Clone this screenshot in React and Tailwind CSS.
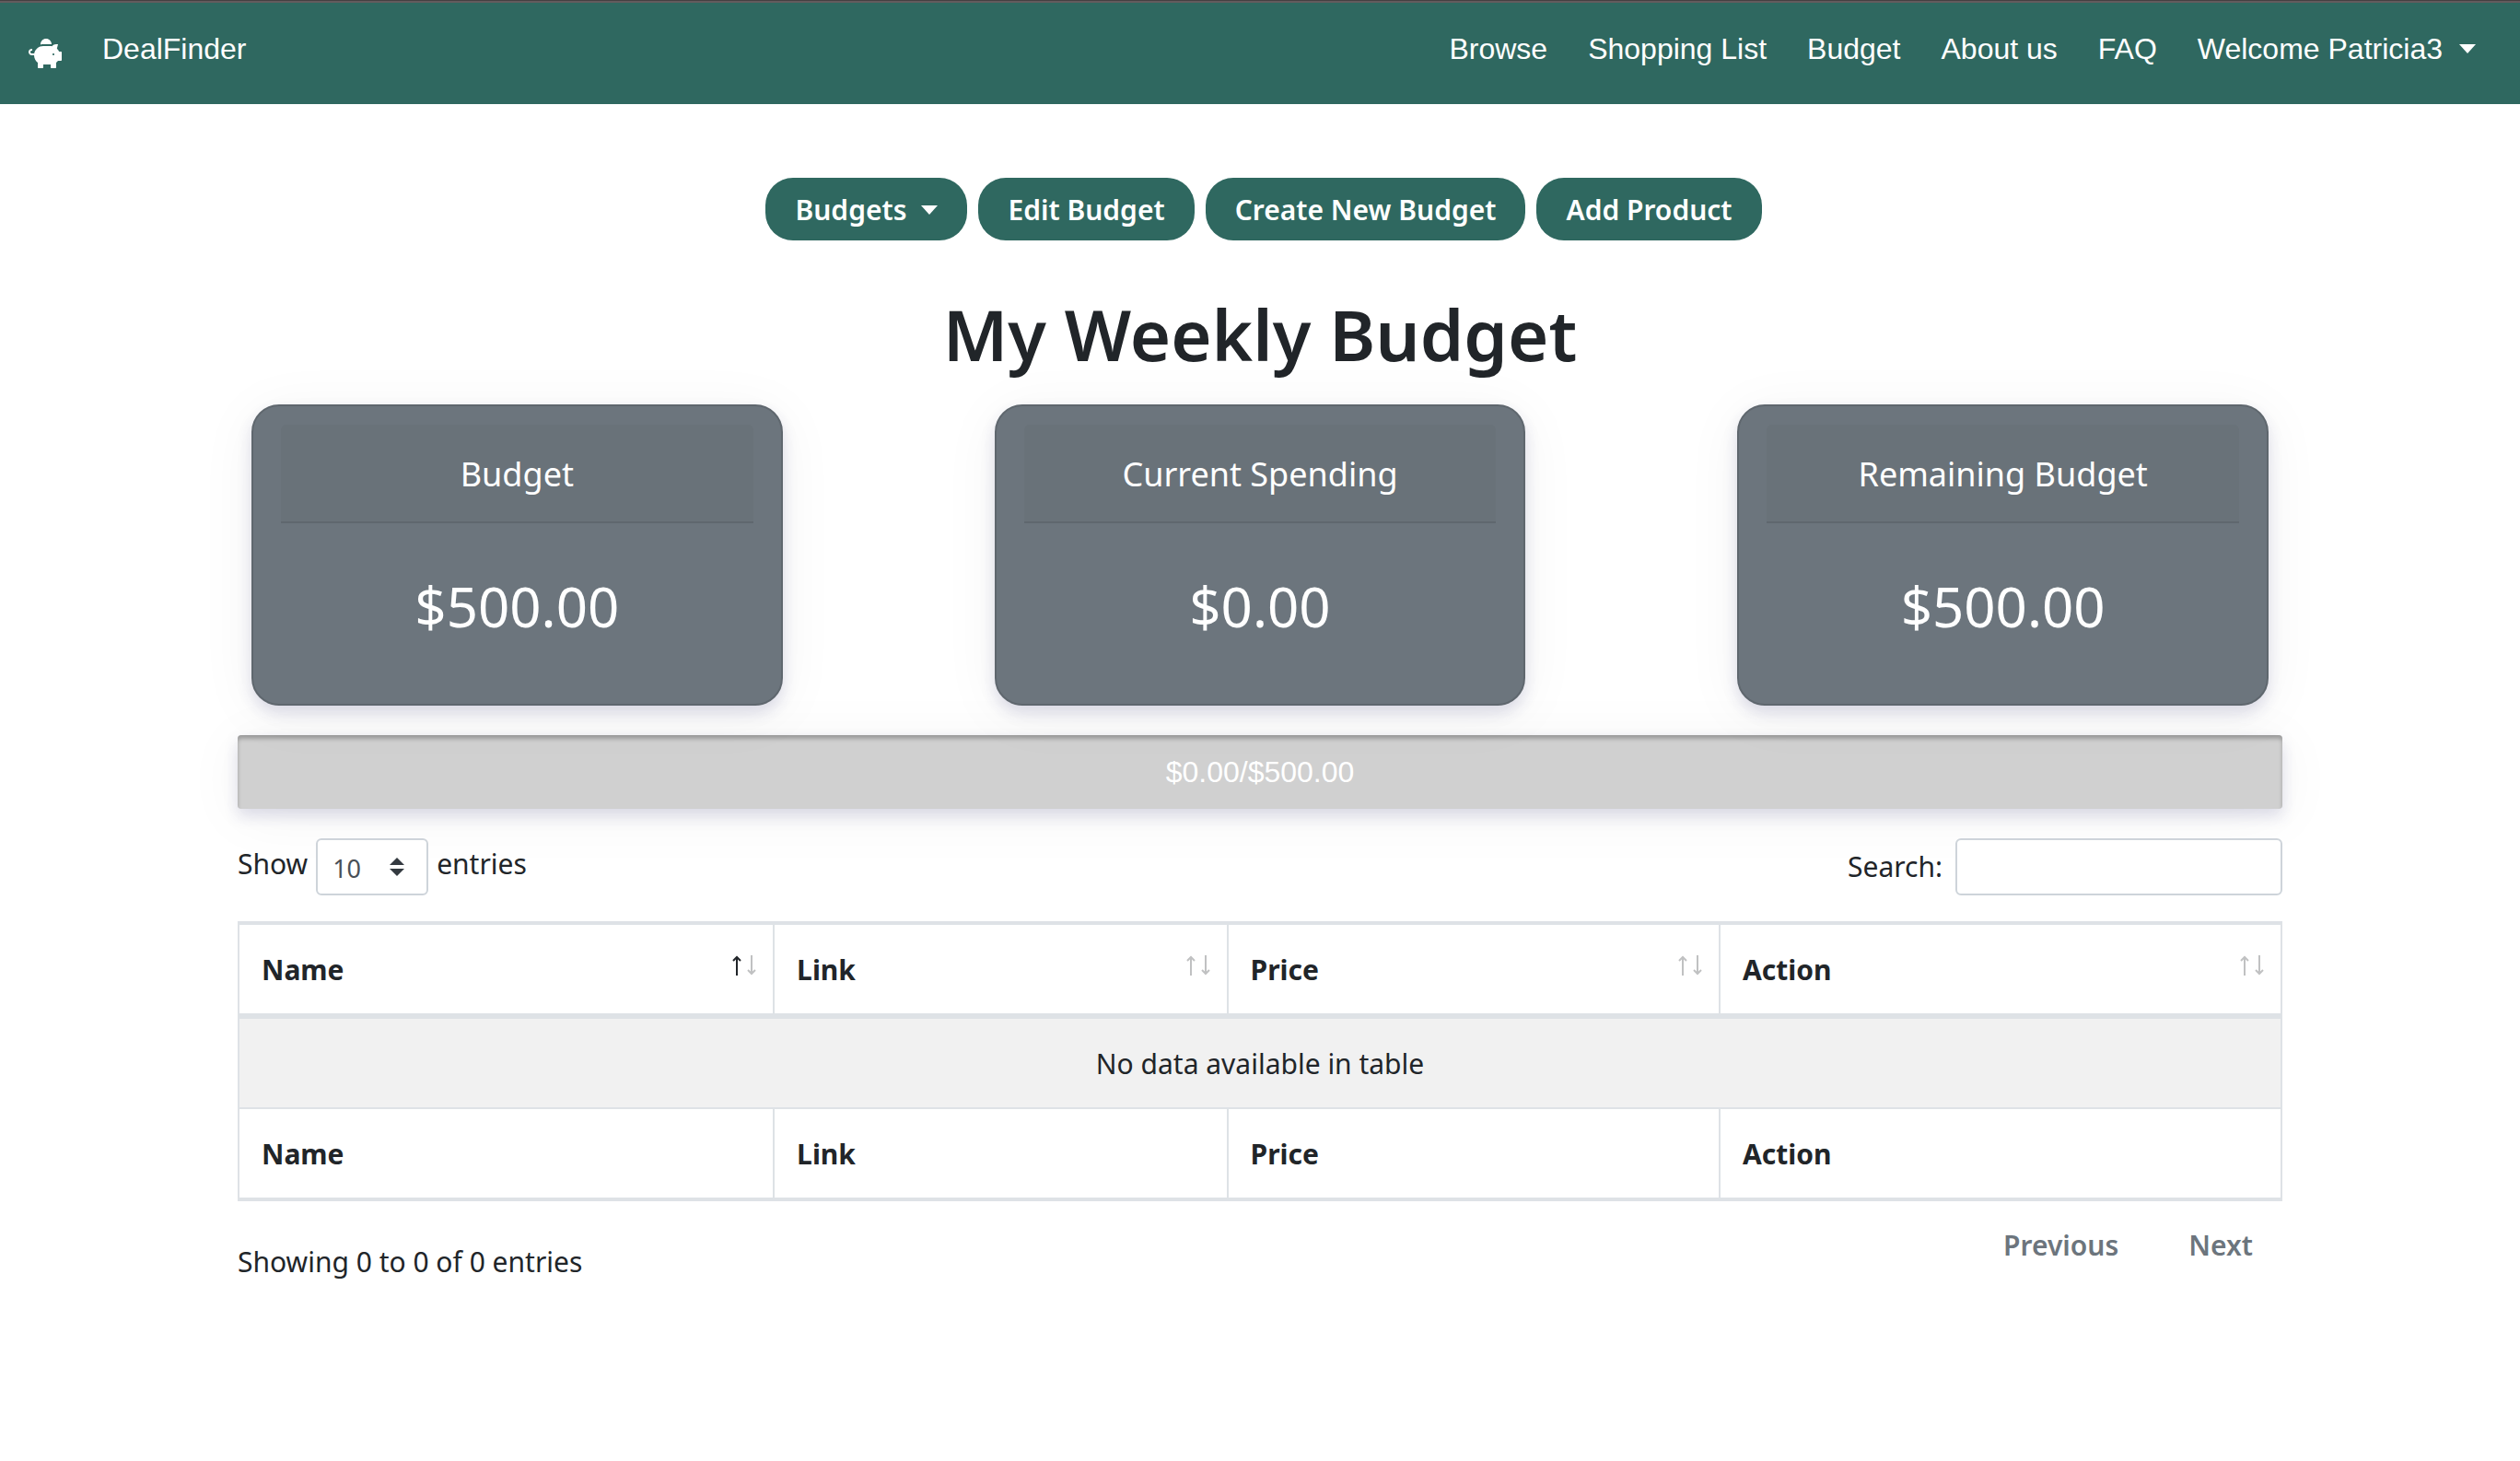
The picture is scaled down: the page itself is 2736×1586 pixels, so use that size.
import React from "react";
import { FaPiggyBank } from "react-icons/fa";

const navLinks = ["Browse", "Shopping List", "Budget", "About us", "FAQ"];

const cards = [
  { title: "Budget", value: "$500.00" },
  { title: "Current Spending", value: "$0.00" },
  { title: "Remaining Budget", value: "$500.00" },
];

const columns = [
  { name: "Name", width: "w-[26.2%]", sorted: true },
  { name: "Link", width: "w-[22.2%]", sorted: false },
  { name: "Price", width: "w-[24.1%]", sorted: false },
  { name: "Action", width: "w-[27.5%]", sorted: false },
];

const actionButton =
  "flex h-[68px] items-center rounded-[30px] bg-[#2f6860] px-8 pt-0.5 text-[30px] leading-[48px] font-semibold text-white";

function Caret() {
  return (
    <svg className="h-[10px] w-[18px]" viewBox="0 0 18 10" fill="currentColor" aria-hidden="true">
      <path d="M0 0h18L9 10z" />
    </svg>
  );
}

function SortArrows({ sorted }) {
  return (
    <svg className="h-[22px] w-[26px]" viewBox="0 0 26 22" fill="none" strokeWidth="2" aria-hidden="true">
      <path d="M5 22V2M1 6l4-4 4 4" stroke={sorted ? "#212529" : "#c0c1c2"} />
      <path d="M21 0v20M17 16l4 4 4-4" stroke="#c0c1c2" />
    </svg>
  );
}

function Navbar() {
  return (
    <header className="border-t border-[#444041] bg-[#2f6860] font-['Liberation_Sans',sans-serif] text-[32px] leading-[48px] text-white">
      <div className="flex h-28 items-start border-t-2 border-[#635b5e] pt-[26px] pr-12 pl-[31px]">
        <a href="#home" className="flex items-start" aria-label="DealFinder home">
          <FaPiggyBank className="mt-[13px] h-8 w-9" />
        </a>
        <a href="#home" className="ml-11">
          DealFinder
        </a>
        <nav className="ml-auto flex gap-11">
          {navLinks.map((label) => (
            <a key={label} href="#nav">
              {label}
            </a>
          ))}
          <button type="button" className="flex items-center gap-[18px]">
            Welcome Patricia3 <Caret />
          </button>
        </nav>
      </div>
    </header>
  );
}

export default function App() {
  return (
    <div className="min-h-screen bg-white font-['Noto_Sans',sans-serif] text-[30px] leading-[48px] text-[#212529]">
      <Navbar />
      <main className="mx-auto max-w-[2220px] pt-20">
        <div className="flex justify-center gap-3 pl-2">
          <button type="button" className={`${actionButton} gap-4`}>
            Budgets <Caret />
          </button>
          <button type="button" className={actionButton}>Edit Budget</button>
          <button type="button" className={actionButton}>Create New Budget</button>
          <button type="button" className={actionButton}>Add Product</button>
        </div>

        <h1 className="mt-[54px] text-center text-[76px] leading-[96px] font-semibold">My Weekly Budget</h1>

        <section className="mt-7 grid grid-cols-3 gap-[230px] px-[15px]">
          {cards.map((card) => (
            <article
              key={card.title}
              className="rounded-[30px] border-2 border-[#5f676e] bg-[#6c757d] px-[30px] pt-5 pb-[58px] text-center text-white shadow-[0_8px_16px_rgba(50,50,120,0.15),0_8px_64px_rgba(17,17,26,0.05)]"
            >
              <h2 className="rounded-t-[6px] border-b-2 border-[#5f676e] bg-[#697279] pt-6 pb-[21px] text-[36px] leading-[60px]">
                {card.title}
              </h2>
              <p className="mt-[42px] text-[60px] leading-[96px]">{card.value}</p>
            </article>
          ))}
        </section>

        <div
          role="progressbar"
          aria-valuenow={0}
          aria-valuemin={0}
          aria-valuemax={500}
          aria-label="Budget spent"
          className="mt-8 flex h-20 items-center justify-center rounded-[4px] bg-[#d0d0d0] font-['Liberation_Sans',sans-serif] text-[32px] text-white shadow-[inset_0_4px_4px_rgba(0,0,0,0.25),0_8px_16px_rgba(50,50,120,0.15),0_8px_64px_rgba(17,17,26,0.05)]"
        >
          $0.00/$500.00
        </div>

        <div className="mt-8 flex items-start justify-between">
          <label className="flex items-start gap-[9px]">
            <span className="pt-1">Show</span>
            <span className="relative flex">
              <select
                defaultValue="10"
                className="h-[62px] w-[122px] appearance-none rounded-[6px] border-2 border-[#ced4da] bg-white px-4 pt-1 text-[27px] text-[#495057]"
              >
                <option>10</option>
                <option>25</option>
                <option>50</option>
                <option>100</option>
              </select>
              <svg
                className="pointer-events-none absolute top-[21px] right-[26px] h-5 w-4"
                viewBox="0 0 16 20"
                fill="#343a40"
                aria-hidden="true"
              >
                <path d="M0 8h16L8 0zM0 12h16l-8 8z" />
              </svg>
            </span>
            <span className="pt-1">entries</span>
          </label>
          <label className="flex items-center gap-[14px]">
            Search:
            <input
              type="search"
              className="h-[62px] w-[355px] rounded-[6px] border-2 border-[#ced4da] bg-white px-4 text-[27px]"
            />
          </label>
        </div>

        <table className="mt-7 w-full table-fixed border-separate border-spacing-0 border-y-4 border-l-2 border-[#dee2e6]">
          <thead>
            <tr>
              {columns.map((col) => (
                <th
                  key={col.name}
                  scope="col"
                  className={`${col.width} h-[102px] border-r-2 border-b-6 border-[#dee2e6] p-0`}
                >
                  <button type="button" className="flex w-full items-start justify-between pt-0.5 pr-[18px] pl-6 font-bold">
                    {col.name}
                    <span className="flex pt-2">
                      <SortArrows sorted={col.sorted} />
                    </span>
                  </button>
                </th>
              ))}
            </tr>
          </thead>
          <tbody>
            <tr>
              <td colSpan={4} className="h-[98px] border-r-2 border-b-2 border-[#dee2e6] bg-[#f1f1f1] p-0 pt-0.5 text-center">
                No data available in table
              </td>
            </tr>
          </tbody>
          <tfoot>
            <tr>
              {columns.map((col) => (
                <th key={col.name} scope="col" className="h-24 border-r-2 border-[#dee2e6] px-6 pt-0.5 pb-0 text-left font-bold">
                  {col.name}
                </th>
              ))}
            </tr>
          </tfoot>
        </table>

        <div className="mt-6 flex items-start justify-between">
          <p className="pt-[18px]">Showing 0 to 0 of 0 entries</p>
          <div className="flex gap-[76px] pr-8 font-semibold text-[#6c757d]">
            <button type="button">Previous</button>
            <button type="button">Next</button>
          </div>
        </div>
      </main>
    </div>
  );
}
